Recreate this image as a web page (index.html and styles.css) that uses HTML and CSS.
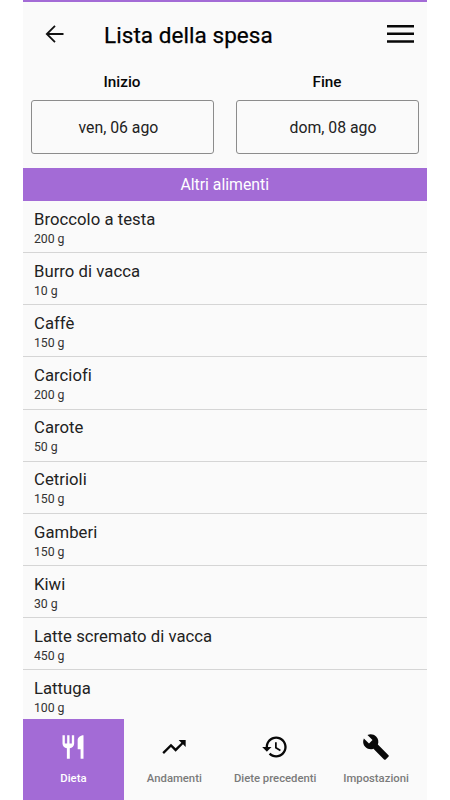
FILE: index.html
```html
<!DOCTYPE html>
<html lang="it">
<head>
<meta charset="utf-8">
<title>Lista della spesa</title>
<link rel="stylesheet" href="styles.css">
</head>
<body>
<div class="app">
  <header class="top">
    <svg class="back" viewBox="0 0 20 20"><path d="M18.5 10H2M10 1.8L1.8 10l8.2 8.2"/></svg>
    <h1>Lista della spesa</h1>
    <svg class="menu" viewBox="0 0 27 18"><path d="M0 0h27v2.6H0zM0 7.5h27v2.6H0zM0 15.2h27v2.6H0z"/></svg>
  </header>
  <section class="dates">
    <div class="field"><label>Inizio</label><div class="box start"><span>ven, 06 ago</span></div></div>
    <div class="field"><label>Fine</label><div class="box end"><span>dom, 08 ago</span></div></div>
  </section>
  <h2><span>Altri alimenti</span></h2>
  <ul class="list">
    <li><b><span>Broccolo a testa</span></b><small>200 g</small></li>
    <li><b><span>Burro di vacca</span></b><small>10 g</small></li>
    <li><b><span>Caffè</span></b><small>150 g</small></li>
    <li><b><span>Carciofi</span></b><small>200 g</small></li>
    <li><b><span>Carote</span></b><small>50 g</small></li>
    <li><b><span>Cetrioli</span></b><small>150 g</small></li>
    <li><b><span>Gamberi</span></b><small>150 g</small></li>
    <li><b><span>Kiwi</span></b><small>30 g</small></li>
    <li><b><span>Latte scremato di vacca</span></b><small>450 g</small></li>
    <li><b><span>Lattuga</span></b><small>100 g</small></li>
  </ul>
  <nav class="tabs">
    <a class="tab active"><svg viewBox="0 0 24 24"><path d="M11 9H9V2H7v7H5V2H3v7c0 2.12 1.66 3.84 3.75 3.97V22h2.5v-9.03C11.34 12.84 13 11.12 13 9V2h-2v7zm5-3v8h2.5v8H21V2c-2.76 0-5 2.24-5 4z"/></svg><span>Dieta</span></a>
    <a class="tab"><svg viewBox="0 0 24 24"><path d="M16 6l2.29 2.29-4.88 4.88-4-4L2 16.59 3.41 18l6-6 4 4 6.3-6.29L22 12V6z"/></svg><span>Andamenti</span></a>
    <a class="tab"><svg viewBox="0 0 24 24"><path d="M13 3c-4.97 0-9 4.03-9 9H1l3.89 3.89.07.14L9 12H6c0-3.87 3.13-7 7-7s7 3.13 7 7-3.13 7-7 7c-1.93 0-3.68-.79-4.94-2.06l-1.42 1.42C8.27 19.99 10.51 21 13 21c4.97 0 9-4.03 9-9s-4.03-9-9-9zm-1 5v5l4.28 2.54.72-1.21-3.5-2.08V8H12z"/></svg><span>Diete precedenti</span></a>
    <a class="tab"><svg viewBox="0 0 24 24"><path d="M22.7 19l-9.1-9.1c.9-2.3.4-5-1.5-6.9-2-2-5-2.4-7.4-1.3L9 6 6 9 1.6 4.7C.4 7.1.9 10.1 2.9 12.1c1.9 1.9 4.6 2.4 6.9 1.5l9.1 9.1c.4.4 1 .4 1.4 0l2.3-2.3c.5-.4.5-1.1.1-1.4z"/></svg><span>Impostazioni</span></a>
  </nav>
</div>
</body>
</html>
```
FILE: styles.css
```css
* { box-sizing: border-box; }
body { margin: 0; background: #fff; font-family: Roboto, sans-serif; color: #111; }
h1, h2, ul { margin: 0; padding: 0; font-weight: 400; }
.app { width: 403.5px; height: 800px; margin-left: 23px; background: #fafafa; border-top: 2px solid #a36bd6; display: flex; flex-direction: column; overflow: hidden; }
.top { height: 65px; flex: none; display: flex; align-items: center; padding: 0 13px 0 21.5px; }
.back { width: 20px; height: 20px; margin-top: -1px; fill: none; stroke: #111; stroke-width: 1.8; }
h1 { font-size: 22.5px; font-weight: 400; line-height: 30px; margin-left: 39.5px; letter-spacing: .06px; flex: 1; white-space: nowrap; color: #000; -webkit-text-stroke: .25px #000; }
.menu { width: 27px; height: 18px; margin-top: -1px; fill: #080808; }
.dates { height: 100.5px; flex: none; display: flex; gap: 22px; padding: 0 8px 0 7.5px; }
.field { flex: 1; display: flex; flex-direction: column; }
label { height: 33px; line-height: 31px; text-align: center; font-weight: 500; font-size: 15.3px; color: #080808; }
.box { height: 54px; border: 1px solid #8c8c8c; border-radius: 3px; line-height: 54px; font-size: 15.8px; color: #222; white-space: nowrap; }
.start { padding-left: 47px; }
.end { padding-left: 53px; }
h2 { height: 33.5px; flex: none; line-height: 34px; background: #a36bd6; color: #fff; font-size: 15.8px; text-align: center; }
.list { height: 518px; flex: none; overflow: hidden; list-style: none; }
li { height: 52.15px; border-bottom: 1px solid #d5d5d5; padding: 6.75px 0 0 11px; }
li b, li small { display: block; white-space: nowrap; }
li b { font-weight: 400; font-size: 16.7px; line-height: 23px; letter-spacing: .03px; color: #222; }
li small { font-size: 12.3px; line-height: 17.6px; letter-spacing: -.08px; color: #333; }
.tabs { flex: 1; display: flex; }
.tab { flex: 1; display: flex; flex-direction: column; align-items: center; padding-top: 14px; font-size: 11.3px; font-weight: 500; color: #7a7a7a; white-space: nowrap; }
.tab svg { width: 28px; height: 28px; fill: #080808; }
.tab span { line-height: 16px; margin-top: 10px; }
.active { background: #a36bd6; color: #fff; }
.active svg { fill: #fff; }
```
